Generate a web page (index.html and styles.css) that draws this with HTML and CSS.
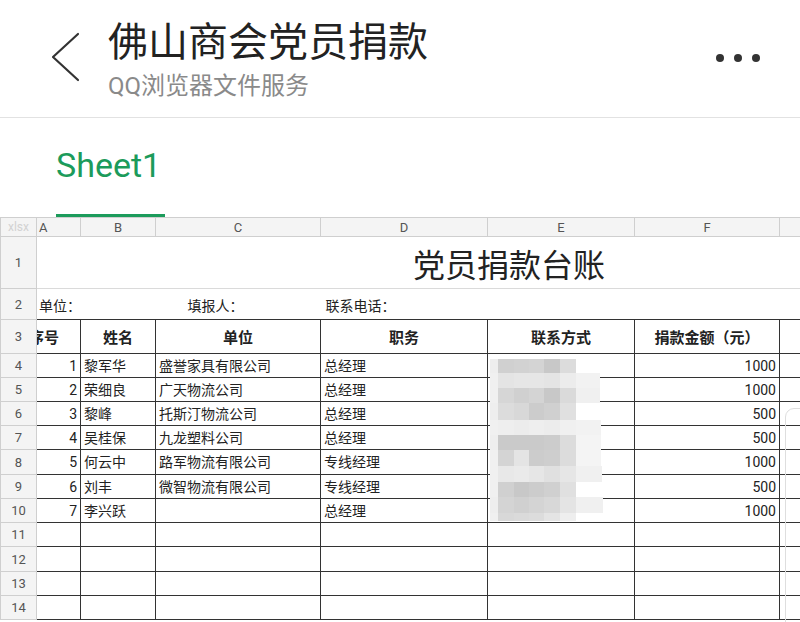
FILE: index.html
```html
<!DOCTYPE html>
<html lang="zh-CN">
<head>
    <meta charset="UTF-8">
    <meta name="viewport" content="width=device-width, initial-scale=1.0">
    <title>佛山商会党员捐款</title>
    <link rel="stylesheet" href="styles.css">
</head>
<body>
    <div class="topbar">
        <svg class="back" width="30" height="50" viewBox="0 0 30 50">
            <path d="M28 2 L3 25 L28 48" fill="none" stroke="#333" stroke-width="2.2" stroke-linecap="round" stroke-linejoin="round"/>
        </svg>
        <div class="titles">
            <div class="title">佛山商会党员捐款</div>
            <div class="subtitle">QQ浏览器文件服务</div>
        </div>
        <div class="more">
            <span class="dot"></span><span class="dot"></span><span class="dot"></span>
        </div>
    </div>

    <div class="tabs">
        <div class="tab">
            <div class="tab-name">Sheet1</div>
            <div class="tab-bar"></div>
        </div>
    </div>

    <div class="sheet">
        <table class="grid">
            <colgroup>
                <col class="w-hd"><col class="w-a"><col class="w-b"><col class="w-c">
                <col class="w-d"><col class="w-e"><col class="w-f"><col class="w-g">
            </colgroup>
            <tr class="r-col">
                <th class="corner">xlsx</th>
                <th class="col-a">A</th>
                <th>B</th>
                <th>C</th>
                <th>D</th>
                <th>E</th>
                <th>F</th>
                <th></th>
            </tr>
            <tr class="r-title">
                <th class="rh">1</th>
                <td colspan="7" class="sheet-title">党员捐款台账</td>
            </tr>
            <tr class="r-info">
                <th class="rh">2</th>
                <td colspan="2" class="info-a">单位：</td>
                <td class="info-c">填报人：</td>
                <td colspan="4" class="info-d">联系电话：</td>
            </tr>
            <tr class="r-head">
                <th class="rh">3</th>
                <td class="cut">序号</td>
                <td>姓名</td>
                <td>单位</td>
                <td>职务</td>
                <td>联系方式</td>
                <td>捐款金额（元）</td>
                <td class="g"></td>
            </tr>
            <tr class="r-data">
                <th class="rh">4</th>
                <td class="num">1</td><td>黎军华</td><td>盛誉家具有限公司</td><td>总经理</td><td></td><td class="num">1000</td><td class="g"></td>
            </tr>
            <tr class="r-data">
                <th class="rh">5</th>
                <td class="num">2</td><td>荣细良</td><td>广天物流公司</td><td>总经理</td><td></td><td class="num">1000</td><td class="g"></td>
            </tr>
            <tr class="r-data">
                <th class="rh">6</th>
                <td class="num">3</td><td>黎峰</td><td>托斯汀物流公司</td><td>总经理</td><td></td><td class="num">500</td><td class="g"></td>
            </tr>
            <tr class="r-data">
                <th class="rh">7</th>
                <td class="num">4</td><td>吴桂保</td><td>九龙塑料公司</td><td>总经理</td><td></td><td class="num">500</td><td class="g"></td>
            </tr>
            <tr class="r-data tall">
                <th class="rh">8</th>
                <td class="num">5</td><td>何云中</td><td>路军物流有限公司</td><td>专线经理</td><td></td><td class="num">1000</td><td class="g"></td>
            </tr>
            <tr class="r-data">
                <th class="rh">9</th>
                <td class="num">6</td><td>刘丰</td><td>微智物流有限公司</td><td>专线经理</td><td></td><td class="num">500</td><td class="g"></td>
            </tr>
            <tr class="r-data">
                <th class="rh">10</th>
                <td class="num">7</td><td>李兴跃</td><td></td><td>总经理</td><td></td><td class="num">1000</td><td class="g"></td>
            </tr>
            <tr class="r-data">
                <th class="rh">11</th>
                <td></td><td></td><td></td><td></td><td></td><td></td><td class="g"></td>
            </tr>
            <tr class="r-data tall">
                <th class="rh">12</th>
                <td></td><td></td><td></td><td></td><td></td><td></td><td class="g"></td>
            </tr>
            <tr class="r-data">
                <th class="rh">13</th>
                <td></td><td></td><td></td><td></td><td></td><td></td><td class="g"></td>
            </tr>
            <tr class="r-data">
                <th class="rh">14</th>
                <td></td><td></td><td></td><td></td><td></td><td></td><td class="g"></td>
            </tr>
        </table>

        <!-- mosaic over the phone numbers -->
        <svg class="mosaic" width="113" height="162" viewBox="0 0 113 162">
            <g>
                <rect x="0" y="0" width="8" height="14" fill="#eeeeee"/>
                <rect x="8" y="0" width="16" height="14" fill="#d0d0d0"/>
                <rect x="24" y="0" width="15" height="14" fill="#d2d2d2"/>
                <rect x="39" y="0" width="15" height="14" fill="#d4d4d4"/>
                <rect x="54" y="0" width="16" height="14" fill="#c8c8c8"/>
                <rect x="70" y="0" width="16" height="14" fill="#dcdcdc"/>
            </g>
            <g>
                <rect x="0" y="14" width="8" height="15" fill="#f0f0f0"/>
                <rect x="8" y="14" width="16" height="15" fill="#e4e4e4"/>
                <rect x="24" y="14" width="15" height="15" fill="#e6e6e6"/>
                <rect x="39" y="14" width="15" height="15" fill="#e6e6e6"/>
                <rect x="54" y="14" width="16" height="15" fill="#e4e4e4"/>
                <rect x="70" y="14" width="16" height="15" fill="#ececec"/>
                <rect x="86" y="14" width="24" height="15" fill="#f2f2f2"/>
            </g>
            <g>
                <rect x="0" y="29" width="8" height="15" fill="#f0f0f0"/>
                <rect x="8" y="29" width="16" height="15" fill="#d6d6d6"/>
                <rect x="24" y="29" width="15" height="15" fill="#d0d0d0"/>
                <rect x="39" y="29" width="15" height="15" fill="#d4d4d4"/>
                <rect x="54" y="29" width="16" height="15" fill="#c8c8c8"/>
                <rect x="70" y="29" width="16" height="15" fill="#dadada"/>
                <rect x="86" y="29" width="24" height="15" fill="#f0f0f0"/>
            </g>
            <g>
                <rect x="0" y="44" width="8" height="17" fill="#eeeeee"/>
                <rect x="8" y="44" width="16" height="17" fill="#dcdcdc"/>
                <rect x="24" y="44" width="15" height="17" fill="#d8d8d8"/>
                <rect x="39" y="44" width="15" height="17" fill="#cccccc"/>
                <rect x="54" y="44" width="16" height="17" fill="#d0d0d0"/>
                <rect x="70" y="44" width="16" height="17" fill="#e0e0e0"/>
                <rect x="86" y="44" width="24" height="17" fill="#ffffff"/>
            </g>
            <g>
                <rect x="0" y="61" width="8" height="15" fill="#f0f0f0"/>
                <rect x="8" y="61" width="16" height="15" fill="#eeeeee"/>
                <rect x="24" y="61" width="15" height="15" fill="#ececec"/>
                <rect x="39" y="61" width="15" height="15" fill="#eeeeee"/>
                <rect x="54" y="61" width="16" height="15" fill="#ececec"/>
                <rect x="70" y="61" width="16" height="15" fill="#f0f0f0"/>
                <rect x="86" y="61" width="25" height="15" fill="#f2f2f2"/>
            </g>
            <g>
                <rect x="0" y="76" width="8" height="15" fill="#eeeeee"/>
                <rect x="8" y="76" width="16" height="15" fill="#cacaca"/>
                <rect x="24" y="76" width="15" height="15" fill="#cacaca"/>
                <rect x="39" y="76" width="15" height="15" fill="#cacaca"/>
                <rect x="54" y="76" width="16" height="15" fill="#cccccc"/>
                <rect x="70" y="76" width="16" height="15" fill="#dcdcdc"/>
                <rect x="86" y="76" width="25" height="15" fill="#f4f4f4"/>
            </g>
            <g>
                <rect x="0" y="91" width="8" height="16" fill="#f0f0f0"/>
                <rect x="8" y="91" width="16" height="16" fill="#d4d4d4"/>
                <rect x="24" y="91" width="15" height="16" fill="#e4e4e4"/>
                <rect x="39" y="91" width="15" height="16" fill="#cccccc"/>
                <rect x="54" y="91" width="16" height="16" fill="#cecece"/>
                <rect x="70" y="91" width="16" height="16" fill="#dcdcdc"/>
                <rect x="86" y="91" width="25" height="16" fill="#f4f4f4"/>
            </g>
            <g>
                <rect x="0" y="107" width="8" height="16" fill="#f0f0f0"/>
                <rect x="8" y="107" width="16" height="16" fill="#e8e8e8"/>
                <rect x="24" y="107" width="15" height="16" fill="#eaeaea"/>
                <rect x="39" y="107" width="15" height="16" fill="#e6e6e6"/>
                <rect x="54" y="107" width="16" height="16" fill="#e0e0e0"/>
                <rect x="70" y="107" width="16" height="16" fill="#e6e6e6"/>
                <rect x="86" y="107" width="26" height="16" fill="#f0f0f0"/>
            </g>
            <g>
                <rect x="0" y="123" width="8" height="15" fill="#f0f0f0"/>
                <rect x="8" y="123" width="16" height="15" fill="#d0d0d0"/>
                <rect x="24" y="123" width="15" height="15" fill="#c8c8c8"/>
                <rect x="39" y="123" width="15" height="15" fill="#cccccc"/>
                <rect x="54" y="123" width="16" height="15" fill="#d0d0d0"/>
                <rect x="70" y="123" width="16" height="15" fill="#e0e0e0"/>
                <rect x="86" y="123" width="26" height="15" fill="#ffffff"/>
            </g>
            <g>
                <rect x="0" y="138" width="8" height="16" fill="#eeeeee"/>
                <rect x="8" y="138" width="16" height="16" fill="#d4d4d4"/>
                <rect x="24" y="138" width="15" height="16" fill="#d0d0d0"/>
                <rect x="39" y="138" width="15" height="16" fill="#d4d4d4"/>
                <rect x="54" y="138" width="16" height="16" fill="#d8d8d8"/>
                <rect x="70" y="138" width="16" height="16" fill="#e4e4e4"/>
                <rect x="86" y="138" width="27" height="16" fill="#f0f0f0"/>
            </g>
            <g>
                <rect x="0" y="154" width="8" height="8" fill="#f0f0f0"/>
                <rect x="8" y="154" width="16" height="8" fill="#d8d8d8"/>
                <rect x="24" y="154" width="15" height="8" fill="#dadada"/>
                <rect x="39" y="154" width="15" height="8" fill="#dcdcdc"/>
                <rect x="54" y="154" width="16" height="8" fill="#e4e4e4"/>
                <rect x="70" y="154" width="16" height="8" fill="#eeeeee"/>
            </g>
        </svg>

        <div class="thumb"></div>
    </div>
</body>
</html>
```

FILE: styles.css
```css
body {
    margin: 0;
    font-family: Roboto, "Noto Sans CJK SC", sans-serif;
    color: #222;
    background-color: #fff;
    height: 622px;
    overflow: hidden;
}
.topbar {
    display: flex;
    align-items: flex-start;
    height: 117px;
    border-bottom: 1px solid #e2e2e2;
}
.back {
    margin: 32px 0 0 50px;
    flex-shrink: 0;
}
.titles {
    margin-left: 28px;
    padding-top: 23px;
}
.title {
    font-size: 40px;
    line-height: 40px;
    color: #222;
}
.subtitle {
    margin-top: 11px;
    font-size: 24px;
    line-height: 24px;
    color: #8a8a8a;
}
.more {
    display: flex;
    gap: 10px;
    margin: 54px 40px 0 auto;
}
.dot {
    width: 8px;
    height: 8px;
    border-radius: 50%;
    background-color: #333;
}
.tabs {
    display: flex;
    height: 99px;
    padding-left: 56px;
}
.tab {
    display: flex;
    flex-direction: column;
    width: 109px;
}
.tab-name {
    margin-top: 30px;
    font-size: 34px;
    line-height: 34px;
    color: #1c9b5b;
}
.tab-bar {
    margin-top: auto;
    height: 3px;
    background-color: #1c9b5b;
}
.sheet {
    position: relative;
}
.grid {
    width: 800px;
    table-layout: fixed;
    border-collapse: collapse;
    font-size: 14px;
}
.w-hd { width: 36px; }
.w-a { width: 44px; }
.w-b { width: 75px; }
.w-c { width: 165px; }
.w-d { width: 167px; }
.w-e { width: 147px; }
.w-f { width: 145px; }
.w-g { width: 21px; }
.grid th {
    border: 1px solid #cfcfcf;
    background-color: #f4f4f4;
    color: #555;
    font-size: 13px;
    font-weight: normal;
    padding: 0;
}
.grid td {
    padding: 0 3px;
    white-space: nowrap;
    overflow: hidden;
}
.r-col {
    height: 19px;
}
.r-col th {
    line-height: 17px;
}
.corner {
    color: #d2d2d2 !important;
    font-size: 12px !important;
}
.col-a {
    text-align: left;
    padding-left: 2px !important;
}
.r-title {
    height: 52px;
}
.r-title td {
    border-bottom: 1px solid #dadada;
}
.sheet-title {
    padding-left: 376px !important;
    font-size: 32px;
    color: #222;
}
.r-info {
    height: 31px;
}
.r-info td {
    border-bottom: 1px solid #333;
    padding-top: 2px;
}
.info-a {
    padding-left: 2px !important;
}
.info-c {
    padding-left: 32px !important;
}
.info-d {
    padding-left: 5px !important;
}
.r-head {
    height: 34px;
}
.r-head td {
    border: 1px solid #333;
    text-align: center;
    font-size: 15px;
    font-weight: bold;
}
.r-head td.cut {
    text-align: left;
    padding: 0;
    text-indent: -8px;
}
.r-data {
    height: 24px;
}
.r-data.tall {
    height: 25px;
}
.r-data td {
    border: 1px solid #333;
    line-height: 20px;
}
.grid td.g {
    border-right: none;
}
.grid td.num {
    text-align: right;
}
.mosaic {
    position: absolute;
    left: 490px;
    top: 142px;
}
.thumb {
    position: absolute;
    left: 785px;
    top: 191px;
    width: 30px;
    height: 260px;
    border: 1px solid #dedede;
    border-radius: 9px;
}
```
